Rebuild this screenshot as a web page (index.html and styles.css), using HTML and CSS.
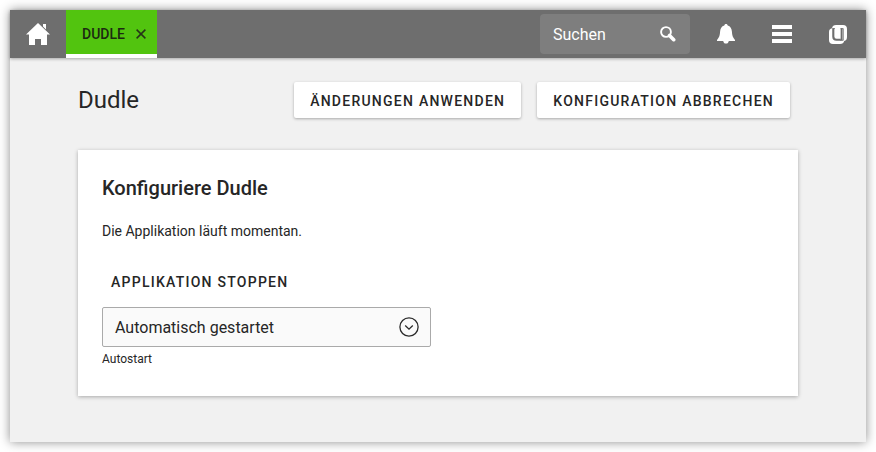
FILE: index.html
```html
<!DOCTYPE html>
<html lang="de">
<head>
<meta charset="utf-8">
<title>Dudle</title>
<link rel="stylesheet" href="styles.css">
</head>
<body>
<div class="window">
  <header class="topbar">
    <a class="home">
      <svg width="24" height="22" viewBox="0 0 24 22"><path d="M12 0 24 11.500H21V22H15V16H9V22H3V11.500H0ZM17 1H20V6.500L17 3.600Z" fill="#fff"/></svg>
    </a>
    <div class="tab"><span>DUDLE</span>
      <svg width="10" height="10" viewBox="0 0 10 10"><path d="M.6.6 9.400 9.400M9.400.6.6 9.400" stroke="#263319" stroke-width="1.500"/></svg>
    </div>
    <div class="search"><span>Suchen</span>
      <svg width="16" height="16" viewBox="0 0 16 16" fill="none" stroke="#fff"><circle cx="6" cy="6" r="4.900" stroke-width="1.900"/><path d="M9.500 9.500 13.700 13.700" stroke-width="3.600" stroke-linecap="round"/></svg>
    </div>
    <nav class="actions">
      <svg width="18" height="20" viewBox="0 0 18 20" fill="#fff"><path d="M9 0C10 0 10.600.7 10.700 1.600 13.400 2.400 14.700 4.600 14.900 7.600 15.100 11.600 15.700 13.300 18 16V17H11.800C11.500 18.700 10.600 19.600 9 19.600S6.500 18.700 6.200 17H0V16C2.300 13.300 2.900 11.600 3.100 7.600 3.300 4.600 4.600 2.400 7.300 1.600 7.400.7 8 0 9 0Z"/></svg>
      <svg width="20" height="18" viewBox="0 0 20 18" fill="#fff"><path d="M0 0H20V4H0ZM0 7H20V11H0ZM0 14H20V18H0Z"/></svg>
      <svg width="18" height="19" viewBox="0 0 18 19" fill="none" stroke="#6e6e6e"><path d="M7 0H14Q18 0 18 4V12Q18 15.500 15.200 16Q14.500 19 11 19H4Q0 19 0 15V7Q0 3.600 3 3.200Q3.600 0 7 0Z" fill="#fff" stroke="none"/><path d="M4.300 3.200V11.500Q4.300 14.800 7.600 14.800H11.800" stroke-width="2.100"/><path d="M12.600 3.200V15.500" stroke-width="1.900"/><path d="M3.500 3.600H6M11.500 3.600H14.300V15.300H11" stroke-width=".8"/></svg>
    </nav>
  </header>
  <main class="content">
    <div class="heading">
      <h1>Dudle</h1>
      <div class="buttons">
        <button class="button">ÄNDERUNGEN ANWENDEN</button>
        <button class="button">KONFIGURATION ABBRECHEN</button>
      </div>
    </div>
    <section class="card">
      <h2>Konfiguriere Dudle</h2>
      <p>Die Applikation läuft momentan.</p>
      <button class="text-button">APPLIKATION STOPPEN</button>
      <div class="select"><span>Automatisch gestartet</span>
        <svg width="20" height="20" viewBox="0 0 20 20" fill="none" stroke="#2b2b2b" stroke-width="1.300"><circle cx="10" cy="10" r="9.100"/><path d="M6.200 8.500 10 12.200 13.800 8.500"/></svg>
      </div>
      <label>Autostart</label>
    </section>
  </main>
</div>
</body>
</html>
```
FILE: styles.css
```css
* { box-sizing: border-box; }
body { margin: 0; padding: 10px; height: 452px; overflow: hidden; background: #fff; font-family: Roboto, sans-serif; font-size: 14px; color: #262626; }
svg { display: block; flex: none; }
h1, h2, p { margin: 0; }
.window { height: 432px; background: #f1f1f1; box-shadow: 0 0 10px rgba(0,0,0,.45); }
.topbar { position: relative; display: flex; align-items: center; height: 48px; background: #6e6e6e; box-shadow: 0 1px 3px rgba(0,0,0,.3); }
.home { width: 56px; padding-left: 16px; }
.tab { display: flex; align-items: center; gap: 11px; width: 91px; height: 48px; padding: 4px 0 0 16px; background: #52c40f; border-bottom: 4px solid #fff; font-weight: 500; color: #1c2a12; }
.search { display: flex; align-items: center; justify-content: space-between; width: 150px; height: 40px; margin-left: auto; padding: 0 14px 0 13px; border-radius: 4px; background: #7e7e7e; color: #fff; font-size: 16px; }
.actions { display: flex; align-items: center; justify-content: space-between; width: 176px; padding: 0 19px 0 27px; }
.content { padding: 24px 68px 0; }
.heading { display: flex; align-items: center; justify-content: space-between; height: 36px; padding-right: 8px; }
h1 { font-size: 24px; font-weight: 400; line-height: 36px; }
.buttons { display: flex; gap: 16px; }
.button, .text-button { border: 0; padding: 0; font: 500 14px/36px Roboto, sans-serif; letter-spacing: 1.25px; color: #262626; background: none; height: 36px; white-space: nowrap; }
.button { padding: 2px 16px 0; line-height: 34px; border-radius: 2px; background: #fff; box-shadow: 0 1px 3px rgba(0,0,0,.3); }
.card { height: 246px; margin-top: 32px; padding: 24px; background: #fff; box-shadow: 0 1px 4px rgba(0,0,0,.3); }
h2 { font-size: 20px; font-weight: 500; line-height: 28px; }
p { margin-top: 19px; line-height: 20px; }
.text-button { display: block; margin: 23px 0 7px 9px; }
.select { display: flex; align-items: center; justify-content: space-between; width: 329px; height: 40px; padding: 0 11px 0 12px; border: 1px solid #aaa; border-radius: 2px; background: #fafafa; font-size: 16px; }
label { display: block; margin-top: 4px; font-size: 12px; line-height: 16px; }
```
